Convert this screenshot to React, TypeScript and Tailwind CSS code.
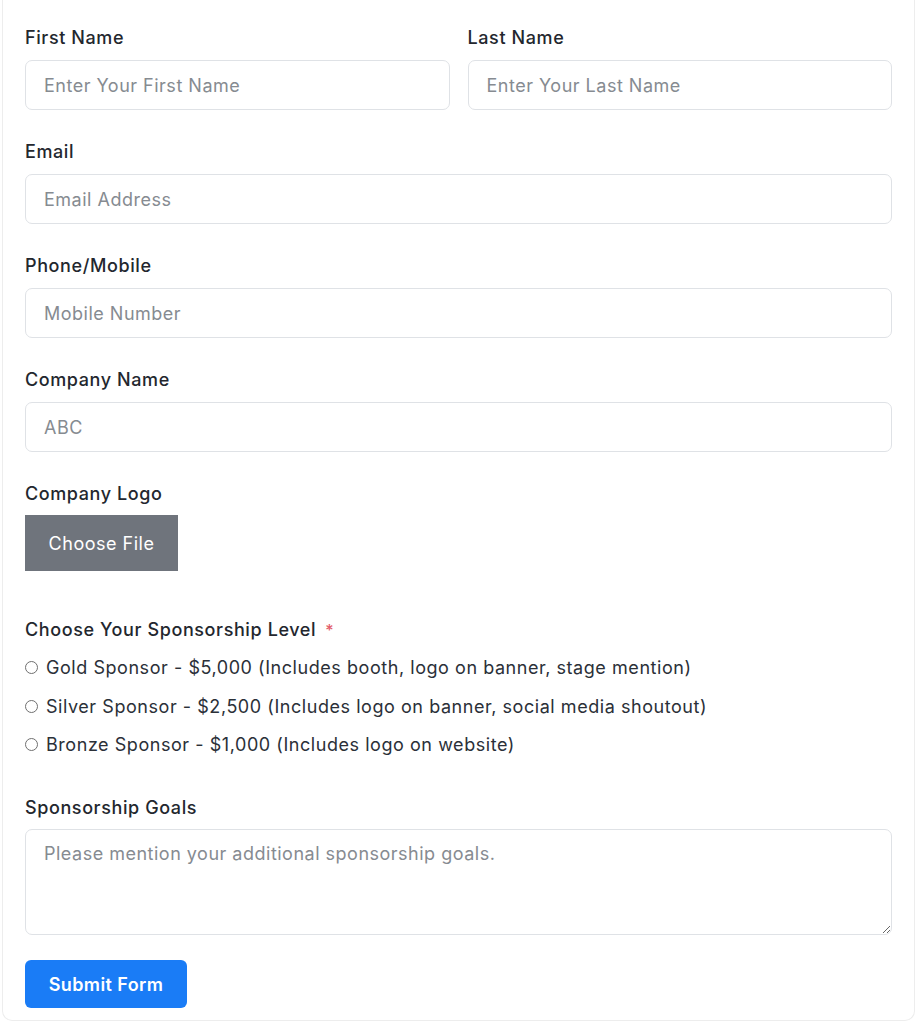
import React from "react";

const inputCls =
  "block w-full h-[50px] rounded-[7px] border border-[#dfe2e6] bg-white px-[18px] text-[18px] tracking-[0.5px] text-[#212529] placeholder:text-[#868b91] outline-none";

function Label({ children }: { children: React.ReactNode }) {
  return (
    <label className="block text-[18px] leading-[27px] font-medium tracking-[0.6px] text-[#23272e] mb-[9px]">
      {children}
    </label>
  );
}

function Radio({ text }: { text: string }) {
  return (
    <label className="flex items-center h-[27px] text-[18px] leading-[27px] tracking-[0.55px] text-[#2b3038]">
      <span className="inline-block w-[13px] h-[13px] rounded-full border border-[#6f6f6f] bg-white mr-[8px] shrink-0" />
      {text}
    </label>
  );
}

export default function App() {
  return (
    <div
      className="w-[917px] h-[1024px] overflow-hidden bg-white"
      style={{ fontFamily: "Inter, 'Noto Sans', sans-serif" }}
    >
      <div className="ml-[2px] mr-[2px] h-[1021px] border-x border-b border-[#ededed] rounded-b-[10px] pl-[22px] pr-[22px] pt-[24px]">
        <div className="grid grid-cols-2 gap-x-[18px]">
          <div>
            <Label>First Name</Label>
            <input className={inputCls} placeholder="Enter Your First Name" />
          </div>
          <div>
            <Label>Last Name</Label>
            <input className={inputCls} placeholder="Enter Your Last Name" />
          </div>
        </div>

        <div className="mt-[28px]">
          <Label>Email</Label>
          <input className={inputCls} placeholder="Email Address" />
        </div>

        <div className="mt-[28px]">
          <Label>Phone/Mobile</Label>
          <input className={inputCls} placeholder="Mobile Number" />
        </div>

        <div className="mt-[28px]">
          <Label>Company Name</Label>
          <input className={inputCls} placeholder="ABC" />
        </div>

        <div className="mt-[28px]">
          <Label>Company Logo</Label>
          <button
            type="button"
            className="h-[56px] w-[153px] bg-[#6f747c] text-white text-[18px] leading-[27px] tracking-[0.5px] -mt-[1px]"
          >
            Choose File
          </button>
        </div>

        <div className="mt-[45px]">
          <div className="text-[18px] leading-[27px] font-medium tracking-[0.6px] text-[#23272e] mb-[10px]">
            Choose Your Sponsorship Level
            <span className="text-[#e35d6a] ml-[9px] text-[16px]">*</span>
          </div>
          <div className="flex flex-col gap-[11.5px]">
            <Radio text="Gold Sponsor - $5,000 (Includes booth, logo on banner, stage mention)" />
            <Radio text="Silver Sponsor - $2,500 (Includes logo on banner, social media shoutout)" />
            <Radio text="Bronze Sponsor - $1,000 (Includes logo on website)" />
          </div>
        </div>

        <div className="mt-[36px]">
          <Label>Sponsorship Goals</Label>
          <textarea
            className="block w-full h-[106px] -mt-[1px] rounded-[7px] border border-[#dfe2e6] bg-white px-[18px] py-[10px] text-[18px] leading-[27px] tracking-[0.5px] text-[#212529] placeholder:text-[#868b91] outline-none resize-y"
            placeholder="Please mention your additional sponsorship goals."
          />
        </div>

        <button
          type="button"
          className="mt-[25px] h-[48px] w-[162px] rounded-[6px] bg-[#1a7cf6] text-white text-[18px] font-semibold tracking-[0.4px]"
        >
          Submit Form
        </button>
      </div>
    </div>
  );
}
